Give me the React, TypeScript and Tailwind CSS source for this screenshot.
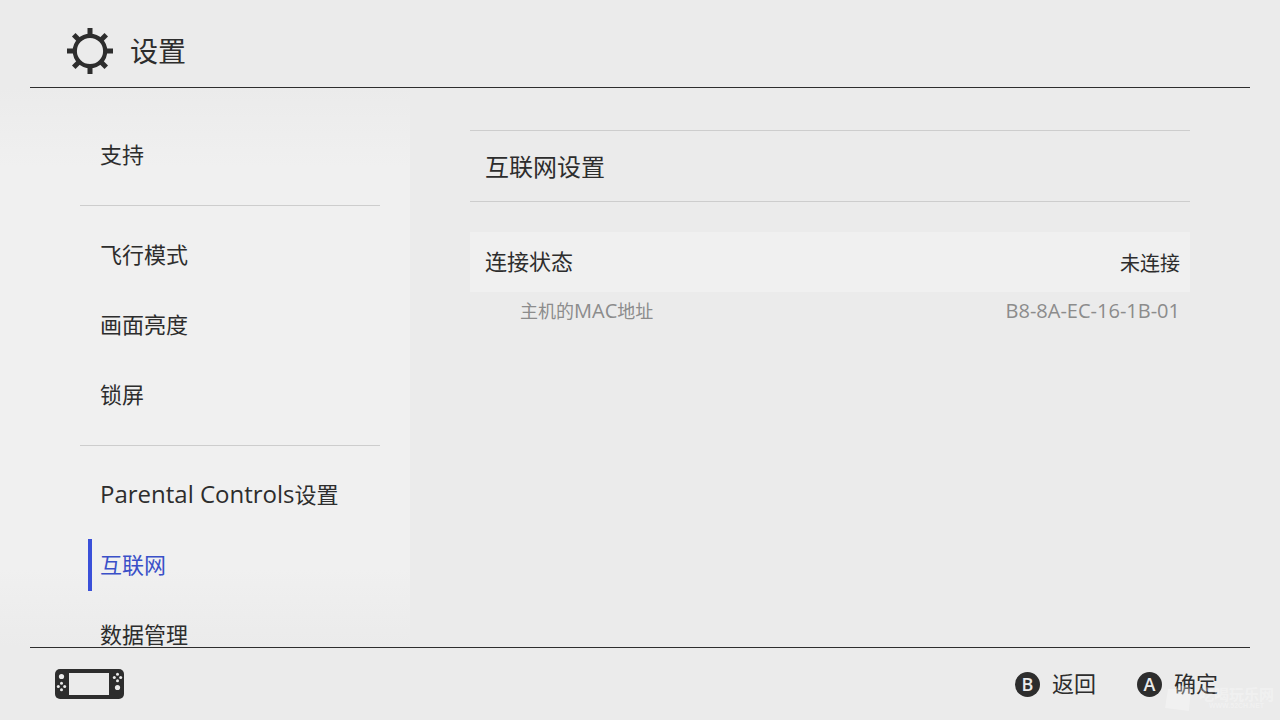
import React from 'react';

interface MenuItemProps {
  label: string;
  latin?: string;
  active?: boolean;
}

interface HintButtonProps {
  letter: string;
  label: string;
}

const groups: MenuItemProps[][] = [
  [{ label: '支持' }],
  [{ label: '飞行模式' }, { label: '画面亮度' }, { label: '锁屏' }],
  [{ latin: 'Parental Controls', label: '设置' }, { label: '互联网', active: true }, { label: '数据管理' }],
];

const teeth = [0, 45, 90, 135, 180, 225, 270, 315];

const GearIcon = () => (
  <svg className="size-12" viewBox="0 0 48 48" aria-hidden="true">
    <circle cx="24" cy="24" r="15.2" fill="none" stroke="#2d2d2d" strokeWidth="4.2" />
    {teeth.map((angle) => (
      <rect key={angle} x="21.5" y="1" width="5" height="8.5" fill="#2d2d2d" transform={`rotate(${angle} 24 24)`} />
    ))}
  </svg>
);

const ConsoleIcon = () => (
  <svg className="h-[30px] w-[70px]" viewBox="0 0 70 30" aria-hidden="true">
    <rect x="0" y="0" width="69" height="30" rx="5" fill="#2d2d2d" />
    <rect x="14" y="4" width="40" height="22" fill="#ebebeb" />
    <g fill="#ebebeb">
      <circle cx="6.5" cy="7.5" r="2.6" />
      <circle cx="6.5" cy="14.3" r="1.5" />
      <circle cx="6.5" cy="20.7" r="1.5" />
      <circle cx="3.3" cy="17.5" r="1.5" />
      <circle cx="9.7" cy="17.5" r="1.5" />
      <circle cx="62.5" cy="5.3" r="1.5" />
      <circle cx="62.5" cy="11.7" r="1.5" />
      <circle cx="59.3" cy="8.5" r="1.5" />
      <circle cx="65.7" cy="8.5" r="1.5" />
      <circle cx="62.5" cy="18.5" r="2.6" />
    </g>
  </svg>
);

const MenuItem: React.FC<MenuItemProps> = ({ label, latin, active }) => (
  <li className="flex h-[70px] items-center pl-2">
    <button
      className={
        active
          ? 'h-[52px] w-full border-l-4 border-[#3a50d9] pb-0.5 pl-2 text-left text-[#3a50c8]'
          : 'h-[52px] w-full border-l-4 border-transparent pb-0.5 pl-2 text-left'
      }
    >
      {latin && <span className="text-2xl leading-8">{latin}</span>}
      {label}
    </button>
  </li>
);

const HintButton: React.FC<HintButtonProps> = ({ letter, label }) => (
  <button className="flex items-center gap-3 text-[22px] leading-8">
    <span className="flex size-[25px] items-center justify-center rounded-full bg-[#2d2d2d] font-['Open_Sans',sans-serif] text-lg leading-6 font-semibold text-[#ebebeb]">
      {letter}
    </span>
    <span className="pb-0.5">{label}</span>
  </button>
);

// Faint site mark in the bottom right corner
const SiteMark = () => (
  <div className="pointer-events-none absolute right-1.5 bottom-2 flex items-center gap-1 text-white/30">
    <svg className="h-7 w-8" viewBox="0 0 32 28" aria-hidden="true">
      <path d="M5 5h9l2-4 12 3-2 23-24-3z" fill="currentColor" />
    </svg>
    <div className="flex flex-col items-center">
      <span className="text-[15px] leading-4 font-bold">吃喝玩乐网</span>
      <span className="font-['Liberation_Sans',sans-serif] text-[7px] leading-2 font-bold">WWW.52CH.NET</span>
    </div>
  </div>
);

export default function App() {
  return (
    <div className="relative flex h-screen flex-col overflow-hidden bg-[#ebebeb] font-['Open_Sans','Noto_Sans_CJK_SC',sans-serif] text-[#2d2d2d]">
      {/* Title bar */}
      <header className="mx-[30px] flex h-[88px] shrink-0 items-center gap-4 border-b border-[#2d2d2d] pt-3.5 pl-9">
        <GearIcon />
        <h1 className="text-[28px] leading-10">设置</h1>
      </header>

      <div className="flex min-h-0 flex-1">
        {/* The list runs past the footer line, so it is clipped here */}
        <nav className="w-[410px] shrink-0 overflow-hidden bg-[linear-gradient(to_bottom,#ebebeb,#f0f0f0_14%,#f0f0f0_86%,#ebebeb)] pr-[30px] pl-20 text-[22px] leading-8">
          {groups.map((group, i) => (
            <ul key={i} className={i === 0 ? 'pt-8 pb-[15px]' : 'border-t border-[#cdcdcd] pt-3.5 pb-[15px]'}>
              {group.map((item) => (
                <MenuItem key={item.label} {...item} />
              ))}
            </ul>
          ))}
        </nav>

        <main className="min-w-0 flex-1 pt-[42px] pr-[90px] pl-[60px]">
          <button className="flex h-[72px] w-full items-center border-y border-[#cdcdcd] px-[15px] pt-0.5 text-2xl">
            互联网设置
          </button>
          <dl className="mt-[30px]">
            <div className="flex h-[60px] items-center justify-between bg-[#f0f0f0] pr-2.5 pl-[15px]">
              <dt className="pb-0.5 text-[22px] leading-8">连接状态</dt>
              <dd className="pt-1 text-xl">未连接</dd>
            </div>
            <div className="flex h-[38px] items-center justify-between pr-2.5 pl-[50px] text-[#8c8c8c]">
              <dt className="text-lg">
                主机的<span className="text-xl">MAC</span>地址
              </dt>
              <dd className="text-xl">B8-8A-EC-16-1B-01</dd>
            </div>
          </dl>
        </main>
      </div>

      <footer className="mx-[30px] flex h-[73px] shrink-0 items-center justify-between border-t border-[#2d2d2d] pr-8 pl-[25px]">
        <ConsoleIcon />
        <div className="flex gap-[41px]">
          <HintButton letter="B" label="返回" />
          <HintButton letter="A" label="确定" />
        </div>
      </footer>

      <SiteMark />
    </div>
  );
}
